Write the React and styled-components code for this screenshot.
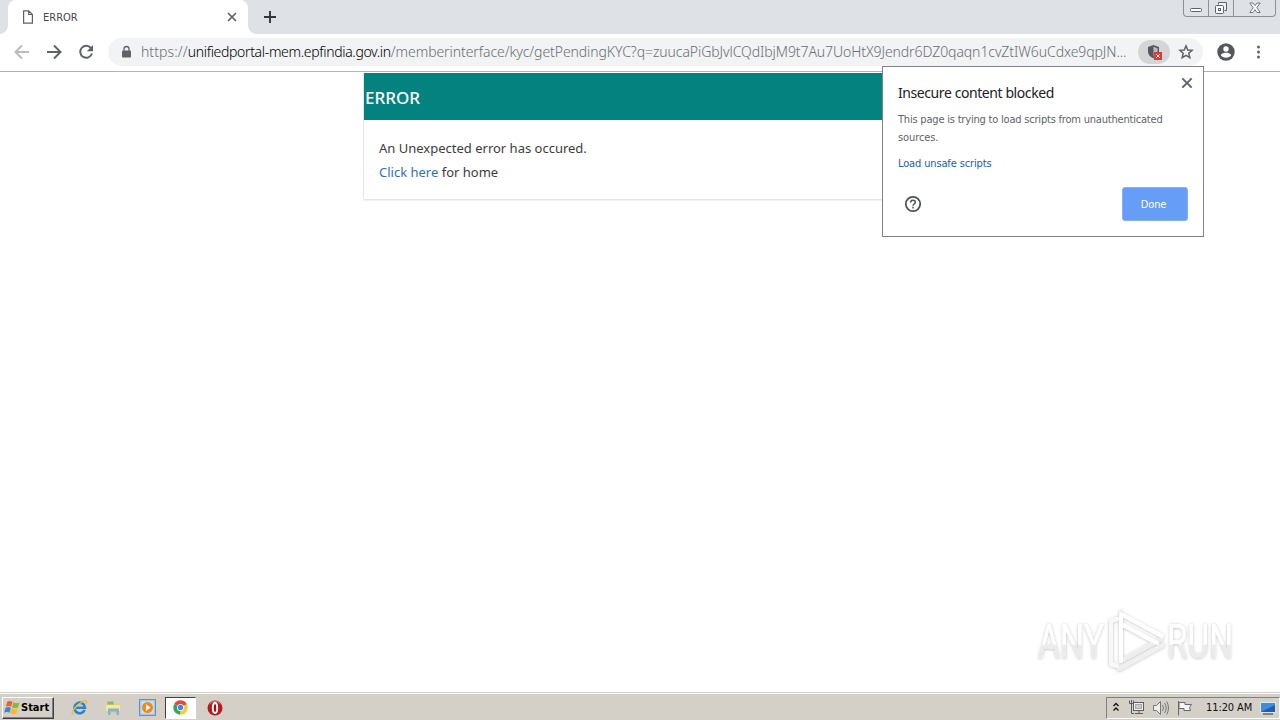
import React from 'react';
import styled, { createGlobalStyle } from 'styled-components';

const GlobalStyle = createGlobalStyle`
  * { box-sizing: border-box; }
  body { margin: 0; background: #fff; overflow: hidden; font-family: "Noto Sans", "Open Sans", sans-serif; }
  svg { display: block; flex: none; }
`;

const Screen = styled.div`
  position: relative;
  display: flex;
  flex-direction: column;
  width: 1280px;
  height: 720px;
  overflow: hidden;
`;

const TabStrip = styled.header`
  display: flex;
  align-items: flex-start;
  height: 34px;
  padding-left: 8px;
  background: #dee1e6;
`;

const Tab = styled.div`
  position: relative;
  display: flex;
  align-items: center;
  width: 240px;
  height: 34px;
  padding: 0 10px 0 14px;
  background: #fff;
  border-radius: 8px 8px 0 0;
  &::before, &::after {
    content: "";
    position: absolute;
    bottom: 0;
    width: 8px;
    height: 8px;
  }
  &::before { left: -8px; background: radial-gradient(circle at 0 0, transparent 7.5px, #fff 8px); }
  &::after { right: -8px; background: radial-gradient(circle at 100% 0, transparent 7.5px, #fff 8px); }
`;

const Label = styled.span`
  font-family: ${p => p.$font || '"Noto Sans", sans-serif'};
  font-size: ${p => p.$size}px;
  font-weight: ${p => p.$weight || 400};
  letter-spacing: ${p => p.$track || 0}px;
  line-height: ${p => p.$line || 16}px;
  color: ${p => p.$color};
  white-space: nowrap;
`;

const TabTitle = styled(Label)`
  flex: 1;
  margin-left: 9px;
  padding-top: 1px;
`;

const NewTab = styled.div`
  display: flex;
  flex: 1;
  padding: 10px 0 0 15px;
`;

const WindowButtons = styled.div`
  display: flex;
  width: 93px;
  height: 17px;
  margin-right: 4px;
  border: 1px solid #8c9099;
  border-top: 0;
  border-radius: 0 0 4px 4px;
`;

const WindowButton = styled.div`
  display: flex;
  align-items: center;
  justify-content: center;
  width: ${p => p.$width}px;
  border-right: ${p => (p.$last ? 0 : 1)}px solid #8c9099;
`;

const Toolbar = styled.nav`
  display: flex;
  align-items: center;
  height: 38px;
  padding: 0 13px 1px;
  background: #fff;
  border-bottom: 1px solid #b1b3b5;
`;

const NavIcons = styled.div`
  display: flex;
  gap: 14px;
  width: 95px;
`;

const Omnibox = styled.div`
  display: flex;
  align-items: center;
  width: 1096px;
  height: 28px;
  padding: 0 9px 0 11px;
  background: #f1f3f5;
  border-radius: 14px;
`;

const LockSlot = styled.div`
  padding-left: 1px;
`;

const Address = styled.div`
  flex: 1;
  margin-left: 8px;
  font: 300 14px/20px "Noto Sans", sans-serif;
  letter-spacing: -0.08px;
  color: #6a6e72;
  white-space: nowrap;
`;

const Scheme = styled.span`
  letter-spacing: 0.1px;
`;

const Host = styled.span`
  color: #000;
  letter-spacing: -0.33px;
`;

const ShieldChip = styled.div`
  display: flex;
  align-items: center;
  justify-content: center;
  width: 32px;
  height: 24px;
  margin-right: 8px;
  border-radius: 12px;
  background: #d3d5d7;
`;

const ToolbarEnd = styled.div`
  display: flex;
  align-items: center;
  gap: 14px;
  margin-left: 12px;
`;

const Page = styled.main`
  flex: 1;
  padding: 1px 0 0 363px;
`;

const ErrorCard = styled.section`
  width: 553px;
  height: 127px;
  border: 1px solid #e6e6e6;
  border-top: 0;
  border-radius: 0 0 2px 2px;
  box-shadow: 0 1px 1px rgba(0, 0, 0, 0.06);
`;

const CardHeader = styled.h1`
  display: flex;
  align-items: center;
  height: 47px;
  margin: 0;
  padding: 2px 0 0 1px;
  background: #04827f;
`;

const CardBody = styled.div`
  display: flex;
  flex-direction: column;
  padding: 16px 15px;
`;

const Link = styled.a`
  color: #3073ab;
`;

const Popup = styled.aside`
  position: absolute;
  left: 882px;
  top: 66px;
  display: flex;
  flex-direction: column;
  width: 322px;
  height: 171px;
  padding: 17px 15px 15px;
  background: #fff;
  border: 1px solid #808385;
`;

const PopupClose = styled.div`
  position: absolute;
  right: 9px;
  top: 9px;
`;

const Message = styled.div`
  display: flex;
  flex-direction: column;
  margin: 9px 0 8px;
`;

const PopupFooter = styled.div`
  display: flex;
  align-items: center;
  justify-content: space-between;
  margin-top: 14px;
  padding-left: 6px;
`;

const DoneButton = styled.button`
  width: 66px;
  height: 34px;
  padding: 0 3px 0 0;
  border: 1px solid #85aff6;
  border-radius: 3px;
  background: #669df6;
`;

const Watermark = styled.div`
  position: absolute;
  left: 1030px;
  top: 602px;
`;

const Taskbar = styled.footer`
  display: flex;
  align-items: center;
  height: 28px;
  padding: 2px 0 0 2px;
  background: #d4d0c8;
  border-top: 1px solid #d4d0c8;
  box-shadow: inset 0 1px 0 #fff;
`;

const StartButton = styled.div`
  display: flex;
  align-items: center;
  width: 52px;
  height: 22px;
  padding-left: 1px;
  border: 1px solid;
  border-color: #fff #404040 #404040 #fff;
  box-shadow: inset -1px -1px 0 #808080;
`;

const Apps = styled.div`
  display: flex;
  align-items: center;
  flex: 1;
  padding-left: 8px;
`;

const AppSlot = styled.div`
  display: flex;
  align-items: center;
  justify-content: center;
  width: ${p => p.$width || 34}px;
  height: 22px;
  ${p => p.$active && `
    background: #fff;
    border: 1px solid;
    border-color: #404040 #fff #fff #404040;
    margin: 0 1px;
  `}
`;

const Tray = styled.div`
  display: flex;
  align-items: center;
  width: 174px;
  height: 22px;
  padding-left: 5px;
  border: 1px solid;
  border-color: #808080 #fff #fff #808080;
`;

const NetworkSlot = styled.div`
  margin: 0 6px 0 8px;
`;

const FlagSlot = styled.div`
  margin-left: 6px;
`;

const TrayClock = styled(Label)`
  width: 54px;
  margin: 0 0 0 13px;
`;

const tahoma = '"DejaVu Sans Condensed", "DejaVu Sans", sans-serif';

const Svg = ({ w, h = w, vb, children, ...rest }) => (
  <svg width={w} height={h} viewBox={vb || `0 0 ${w} ${h}`} fill="none" {...rest}>{children}</svg>
);

const CloseIcon = ({ size, color }) => (
  <Svg w={size} vb="0 0 12 12" stroke={color} strokeWidth="1.7"><path d="M2 2l8 8M10 2l-8 8" /></Svg>
);

function BrowserTabs() {
  return (
    <TabStrip>
      <Tab>
        <Svg w={12} h={14} stroke="#5f6368" strokeWidth="1.2">
          <path d="M1.6 .8h5.1L10.4 4.5v8.7H1.6zM6.7 1v3.5h3.5" />
        </Svg>
        <TabTitle $size={11} $font={tahoma} $color="#45484c">ERROR</TabTitle>
        <CloseIcon size={12} color="#5f6368" />
      </Tab>
      <NewTab>
        <Svg w={14} stroke="#32363b" strokeWidth="1.9"><path d="M7 1v12M1 7h12" /></Svg>
      </NewTab>
      <WindowButtons>
        <WindowButton $width={25}>
          <Svg w={12} h={14} stroke="#5d626b"><rect x=".5" y="7.500" width="11" height="3" rx="1" fill="#fff" /></Svg>
        </WindowButton>
        <WindowButton $width={25}>
          <Svg w={14} stroke="#5d626b">
            <path d="M4.5 3.5v-2h8v8h-2" fill="#eef0f3" />
            <rect x="1.5" y="4.5" width="8" height="8" rx="1" fill="#fff" />
            <rect x="4.5" y="7.5" width="2" height="2" />
          </Svg>
        </WindowButton>
        <WindowButton $width={41} $last>
          <Svg w={12} h={12} stroke="#656a72" strokeWidth=".9">
            <path d="M.8 1h3.200l2 2.600L8 1h3.200L7.800 5.700l3.400 4.800H8L6 7.700l-2 2.800H.8l3.400-4.800z" fill="#fff" />
          </Svg>
        </WindowButton>
      </WindowButtons>
    </TabStrip>
  );
}

function BrowserToolbar() {
  return (
    <Toolbar>
      <NavIcons>
        <Svg w={18} stroke="#b9bbbe" strokeWidth="2"><path d="M16 9H3M9 2.500L2.500 9 9 15.500" /></Svg>
        <Svg w={18} stroke="#5f6368" strokeWidth="2"><path d="M2 9h13M9 2.500L15.500 9 9 15.500" /></Svg>
        <Svg w={18}>
          <path d="M14.300 5.500A6 6 0 1 0 15 10.500" stroke="#5f6368" strokeWidth="2" />
          <path d="M16 2v6.200h-6.200z" fill="#5f6368" />
        </Svg>
      </NavIcons>
      <Omnibox>
        <LockSlot>
          <Svg w={13} h={14}>
            <rect x="2" y="5.500" width="9" height="7" rx="1" fill="#5f6368" />
            <path d="M4 6V4a2.500 2.500 0 0 1 5 0v2" stroke="#5f6368" strokeWidth="1.300" />
          </Svg>
        </LockSlot>
        <Address>
          <Scheme>https://</Scheme><Host>unifiedportal-mem.epfindia.gov.in</Host>/memberinterface/kyc/getPendingKYC?q=zuucaPiGbJvlCQdIbjM9t7Au7UoHtX9Jendr6DZ0qaqn1cvZtIW6uCdxe9qpJN...
        </Address>
        <ShieldChip>
          <Svg w={16}>
            <path d="M7.500 1L13 3v4.500c0 3-2.500 5.800-5.500 6.700C4.500 13.300 2 10.500 2 7.500V3z" fill="#54585d" />
            <path d="M7.500 2.800L11.500 4.200v3.300c0 2.300-1.700 4.300-4 5z" fill="#b9bcbf" />
            <rect x="8" y="8" width="8" height="8" fill="#d63c32" />
            <path d="M10.300 10.300l3.400 3.400M13.700 10.300l-3.400 3.400" stroke="#fff" />
          </Svg>
        </ShieldChip>
        <Svg w={16} stroke="#5f6368" strokeWidth="1.500">
          <path d="M8 1.900l1.750 4.050 4.350.4-3.300 2.900 1 4.350L8 11.300l-3.800 2.300 1-4.350-3.300-2.900 4.350-.4z" />
        </Svg>
      </Omnibox>
      <ToolbarEnd>
        <Svg w={20}>
          <circle cx="11" cy="10" r="8.700" fill="#54585d" />
          <circle cx="11" cy="7" r="2.700" fill="#fff" />
          <path d="M5.700 12.900c1-1.600 3.600-2.200 5.300-2.200s4.300.6 5.300 2.200a6.300 6.300 0 0 1-10.600 0z" fill="#fff" />
        </Svg>
        <Svg w={18}>
          {[4, 9, 14].map(y => <circle key={y} cx="9.500" cy={y} r="1.500" fill="#5f6368" />)}
        </Svg>
      </ToolbarEnd>
    </Toolbar>
  );
}

function ContentPopup() {
  return (
    <Popup>
      <PopupClose><CloseIcon size={14} color="#5f6368" /></PopupClose>
      <Label $size={14} $track={-0.42} $line={18} $color="#202124">Insecure content blocked</Label>
      <Message>
        <Label $size={11} $font={tahoma} $track={-0.2} $line={18} $color="#5f6368">This page is trying to load scripts from unauthenticated</Label>
        <Label $size={11} $font={tahoma} $track={-0.1} $line={18} $color="#5f6368">sources.</Label>
      </Message>
      <Label $size={11} $font={tahoma} $track={-0.14} $line={18} $color="#1861a8">Load unsafe scripts</Label>
      <PopupFooter>
        <Svg w={18} stroke="#4b4f53" strokeWidth="1.700">
          <circle cx="9" cy="9" r="7.200" />
          <path d="M6.700 7.400c0-1.500 1-2.200 2.300-2.200s2.300.8 2.300 2.100c0 1.600-2.300 1.800-2.300 3.400M9 11.800v1.600" strokeWidth="1.500" />
        </Svg>
        <DoneButton><Label $size={11} $font={tahoma} $track={-0.1} $color="#fff">Done</Label></DoneButton>
      </PopupFooter>
    </Popup>
  );
}

function AnyRunMark() {
  const word = {
    fontFamily: 'Roboto, sans-serif', fontWeight: 400, fontSize: 48,
    fill: 'url(#wordFill)', lengthAdjust: 'spacingAndGlyphs', y: 56,
  };
  return (
    <Watermark>
      <Svg w={250} h={76}>
        <defs>
          <linearGradient id="wordFill" x1="0" y1="0" x2="0" y2="1">
            <stop offset=".55" stopColor="#fff" />
            <stop offset=".56" stopColor="#ebebeb" />
          </linearGradient>
          <filter id="soft" x="-10%" y="-20%" width="120%" height="140%">
            <feDropShadow dx="0" dy="0.500" stdDeviation="1.700" floodColor="#000" floodOpacity=".27" />
          </filter>
        </defs>
        <g filter="url(#soft)">
          <text x="8" textLength="66" {...word}>ANY</text>
          <text x="137" textLength="66" {...word}>RUN</text>
          <g strokeLinejoin="round" strokeLinecap="round" strokeWidth="4">
            <path d="M87 17l-6 2v43l6 2" stroke="#f9f9f9" />
            <path d="M91 10v49l40-22" stroke="#eee" />
            <path d="M91 59V12l41 22M91 22l36 19" stroke="#fff" />
            <path d="M89 67l44-24" stroke="#f0f0f0" />
          </g>
        </g>
      </Svg>
    </Watermark>
  );
}

const WindowsFlag = () => (
  <Svg w={17} vb="0 0 16 16">
    <path d="M3 2.500c2-1 3.500-.8 5 .2L6.800 7.300c-1.600-1-3.300-1-5-.2z" fill="#e8642c" />
    <path d="M8.800 3.200c1.800 1 3.600 1 5.700.2l-1.300 4.500c-2 .9-3.900.8-5.600-.2z" fill="#86b63c" />
    <path d="M1.500 8.200c1.900-.9 3.400-.7 5 .2L5.200 13c-1.500-1-3.200-1-5-.2z" fill="#3e86cd" />
    <path d="M7.300 8.800c1.800 1 3.600 1 5.700.2l-1.300 4.600c-2 .9-3.900.7-5.600-.3z" fill="#f3b82c" />
  </Svg>
);

const ExplorerE = () => (
  <Svg w={17}>
    <path d="M13.600 11A5.300 5.300 0 1 1 14 8.700H5" stroke="#2585d3" strokeWidth="2.600" />
    <path d="M1.800 15.500C-.8 13 6.500 5 12 2.300c3.500-1.500 4.500-.2 3 2.500" stroke="#e9bd38" strokeWidth="1.400" />
  </Svg>
);

const Folder = () => (
  <Svg w={18} h={17}>
    <path d="M2 3h5l1.500 1.500H16V14H2z" fill="#ebcb6e" />
    <path d="M3.500 2.500h6v3h-6z" fill="#83b87b" />
    <path d="M2 6h14v6H2z" fill="#f8e7a1" />
    <path d="M4 9.500h11V16h-2.500v-3.500h-6V16H4z" fill="#78b7df" />
  </Svg>
);

const MediaPlayer = () => (
  <Svg w={17}>
    <rect x=".5" y=".5" width="16" height="16" fill="#9fcaf0" stroke="#5a94cb" />
    <rect x="2.500" y="2.500" width="12" height="12" fill="#d1e6f8" />
    <circle cx="8.500" cy="8.500" r="5.500" fill="#f18a1c" />
    <path d="M7 5.300v6.400l4.600-3.200z" fill="#fff" />
  </Svg>
);

const ChromeLogo = () => (
  <Svg w={15}>
    <path d="M7.500 7.500L1.200 4A7.200 7.200 0 0 1 13.900 4.200z" fill="#df4a3c" />
    <path d="M7.500 7.500L13.900 4.200A7.200 7.200 0 0 1 7 14.700z" fill="#f7cc3b" />
    <path d="M7.500 7.500L7 14.700A7.200 7.200 0 0 1 1.200 4z" fill="#3ca455" />
    <circle cx="7.500" cy="7.500" r="3.500" fill="#fff" />
    <circle cx="7.500" cy="7.500" r="2.700" fill="#4586ec" />
  </Svg>
);

const OperaLogo = () => (
  <Svg w={16}>
    <circle cx="8" cy="8" r="7.500" fill="#b51a20" />
    <path d="M2.500 4a7.200 7.200 0 0 1 11 0" stroke="#e27673" />
    <ellipse cx="8" cy="8" rx="2.200" ry="5" fill="#9b1116" stroke="#fff" strokeWidth="1.900" />
  </Svg>
);

function SystemTaskbar() {
  return (
    <Taskbar>
      <StartButton>
        <WindowsFlag />
        <Label $size={11} $weight={700} $font={tahoma} $track={0} $color="#000">Start</Label>
      </StartButton>
      <Apps>
        <AppSlot><ExplorerE /></AppSlot>
        <AppSlot><Folder /></AppSlot>
        <AppSlot><MediaPlayer /></AppSlot>
        <AppSlot $active $width={31}><ChromeLogo /></AppSlot>
        <AppSlot $width={35}><OperaLogo /></AppSlot>
      </Apps>
      <Tray>
        <Svg w={8} h={12} stroke="#111" strokeWidth="1.300"><path d="M1.500 4L4 1.500 6.500 4M1.500 8.500L4 6l2.500 2.500" /></Svg>
        <NetworkSlot>
          <Svg w={18} h={17} stroke="#5c5c5c">
            <rect x="5.500" y="3.500" width="10" height="8" fill="#eee" />
            <rect x="7.500" y="5.500" width="6" height="4" fill="#c9c9c9" stroke="#aaa" />
            <path d="M7 14.500h8M11 11.500v3M1.500 1.500v3h4v-3M3.500 1v3M3.500 5v9.500H6" />
          </Svg>
        </NetworkSlot>
        <Svg w={18} h={16} stroke="#777">
          <path d="M1.500 5.500h3l4-4v13l-4-4h-3z" fill="#eee" />
          <path d="M10.500 5q2 3 0 6M12.500 3q3.500 5 0 10M14.700 1.500q3.600 6.500 0 13" />
        </Svg>
        <FlagSlot>
          <Svg w={17} h={16} stroke="#686868">
            <path d="M2.500 1v14.500M3 2.500h6v2h6.500l-2 3 1 3H8v-2H3z" fill="#f5f5f5" />
          </Svg>
        </FlagSlot>
        <TrayClock $size={11} $font={tahoma} $track={-0.1} $color="#111">11:20 AM</TrayClock>
        <Svg w={16} h={14}>
          <rect x=".5" y="1.500" width="15" height="10" fill="#1c5fb5" stroke="#d7e7f5" />
          <path d="M1 11L15 4V2H1z" fill="#438ad8" />
          <path d="M3 13h10" stroke="#333" />
        </Svg>
      </Tray>
    </Taskbar>
  );
}

export default function App() {
  return (
    <Screen>
      <GlobalStyle />
      <BrowserTabs />
      <BrowserToolbar />
      <Page>
        <ErrorCard>
          <CardHeader><Label $size={17} $weight={500} $line={24} $color="#fff">ERROR</Label></CardHeader>
          <CardBody>
            <Label $size={13} $line={24} $color="#3c3c3c">An Unexpected error has occured.</Label>
            <Label $size={13} $line={24} $color="#3c3c3c"><Link>Click here</Link> for home</Label>
          </CardBody>
        </ErrorCard>
      </Page>
      <SystemTaskbar />
      <ContentPopup />
      <AnyRunMark />
    </Screen>
  );
}
